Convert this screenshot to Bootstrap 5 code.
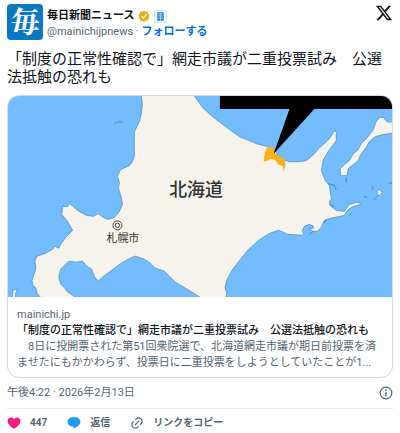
<!DOCTYPE html>
<html lang="ja">
<head>
<meta charset="utf-8">
<meta name="viewport" content="width=device-width, initial-scale=1">
<title>毎日新聞ニュース</title>
<link href="https://cdn.jsdelivr.net/npm/bootstrap@5.3.0/dist/css/bootstrap.min.css" rel="stylesheet">
<style>
body { font-family: Roboto, "Noto Sans CJK JP", sans-serif; font-size: 11px; line-height: 16px; color: #0f1419; background: #fff; }
.post { padding: 4px 7px 0; }
.avatar { width: 36px; height: 36px; border-radius: 4px; background: #0b78c4; color: #fff; font: 700 29px/34px "Noto Serif CJK JP", "Noto Sans CJK JP", serif; text-align: center; }
.soft { color: #536471; }
.follow { color: #006fd6; }
.gold { width: 12px; height: 12px; }
.org { width: 13px; height: 13px; }
.xlogo { width: 18px; height: 18px; }
.headline { font-size: 15px; line-height: 18px; margin: 10px 0 9px; }
.preview { border: 1px solid #cfd9de; border-radius: 12px; overflow: hidden; color: inherit; }
.preview-body { padding: 10px 9px 6px; }
.preview-title { font-weight: 500; }
.meta { padding: 7px 0 7px; border-bottom: 1px solid #e3e8eb; }
.round { width: 14px; height: 14px; }
.actions { gap: 20px; padding-top: 6px; }
.actions .btn { font-size: 10px; line-height: 16px; font-weight: 700; color: #536471; gap: 9px; }
.actions svg { width: 14px; height: 14px; }
</style>
</head>
<body>
<article class="post">
  <header class="d-flex align-items-start">
    <div class="avatar flex-shrink-0" aria-hidden="true">毎</div>
    <div class="flex-grow-1 ms-1 pt-1">
      <div class="d-flex align-items-center gap-1">
        <span class="fw-bold">毎日新聞ニュース</span>
        <svg class="gold" viewBox="0 0 24 24" role="img" aria-label="認証済み"><path fill="#e2b01e" d="M12 1l3 2.500 4-.3 1 3.800 3 2.500-1.500 3.500L23 16l-3 2-1 4-4-.5L12 24l-3-2.500-4 .5-1-4-3-2 1.500-3.500L1 9.500 4 7l1-3.800 4 .3z"/><path fill="none" stroke="#fff8df" stroke-width="2.500" d="M7 12.500l3.500 3.500L17 8.500"/></svg>
        <svg class="org" viewBox="0 0 12 12" aria-hidden="true"><rect x=".5" y=".5" width="11" height="11" rx="1" fill="#eef6fb" stroke="#d5e4ee"/><path fill="#2b8bc9" d="M3 2h6v8H3z"/><path stroke="#cfe7f7" stroke-width=".6" d="M4 3.500h4M4 5.500h4M4 7.500h4M6 3v7"/></svg>
      </div>
      <div><span class="soft">@mainichijpnews · </span><a href="#" class="follow fw-bold text-decoration-none">フォローする</a></div>
    </div>
    <svg class="xlogo" viewBox="0 0 24 24" role="img" aria-label="X"><path fill="#0f1419" d="M18.244 2.250h3.308l-7.227 8.260 8.502 11.240H16.170l-5.214-6.817L4.990 21.750H1.680l7.730-8.835L1.254 2.250H8.080l4.713 6.231zm-1.161 17.520h1.833L7.084 4.126H5.117z"/></svg>
  </header>

  <p class="headline">「制度の正常性確認で」網走市議が二重投票試み　公選法抵触の恐れも</p>

  <a href="#" class="preview d-block text-decoration-none">
    <svg class="d-block w-100" viewBox="7 95 386 202" role="img" aria-label="北海道の地図">
      <path fill="#73bcff" d="M7 95h386v202H7z"/>
      <g fill="#f5f3ec" stroke="#4f94c4" stroke-width=".8" stroke-linejoin="round">
        <path d="M141 93L142 104 141 113 139 121 134 131 134 155 132 161 129 165 120 169 117 176 119 182 118 188 121 197 122 204 119 211 114 217 107 219 101 216 98 213 93 216 86 215 77 210 69 203 67 206 62 206 61 214 66 220 72 230 65 237 60 244 58 248 54 246 52 249 45 253 36 256 34 261 35 268 34 272 31 280 32 285 35 288 36 293 41 299H76L73 296 67 292 64 288 60 284 58 277 60 269 68 261 75 262 82 261 86 266 91 269 94 277 98 281 102 277 110 271 121 263 130 258 135 256 144 259 150 263 155 268 164 271 175 282 190 291 203 299H226L227 292 225 288 227 280 233 269 240 260 248 250 259 240 270 233 279 230 284 232 288 234 303 235 304 234 303 230 305 226 310 224 314 226 314 228 310 228 313 231 318 231 322 227 325 220 328 219 331 218 345 215 348 210 352 207 361 204 361 202 357 202 350 204 345 211 337 210 332 206 330 202 332 198 330 185 326 180 322 170 324 159 330 149 337 140 337 131 335 130 330 138 326 142 320 147 315 153 307 160 299 161 290 161 280 158 275 149 272 147 257 143 240 136 230 129 213 116 203 107 193 93z"/>
        <path d="M341 168L341 175 348 175 349 168 359 160 362 153 367 147 370 141 376 136 383 134 395 132V121L388 121 385 117 381 116 377 121 374 129 368 137 362 143 359 149 354 153 350 160 345 164z"/>
        <path d="M378 190L381 189 383 192 381 195 378 194zM11 299L12 290 17 289 15 292 14 299z"/>
      </g>
      <path fill="none" stroke="#3d87b8" stroke-width="1" d="M329 183l6 2 2 4M330 204l5 2M347 177v5M314 231l-4 3M324 223l4-4M365 196l3 1M374 200l5-5M373 189l1-3M390 183l3-1M114 123l3-2M118 122l2-2 2 2M350 215l2-2"/>
      <path fill="#fbb117" d="M267 147l6-1 3 7 4 3 5 2 1 6-2 7-1-6-4-1-4-5-4-1-3 2-4 1 1-8z"/>
      <path d="M220 95h173v13H315l-41 45 16-45h-70z"/>
      <g fill="#333" font-family="Noto Sans CJK JP, sans-serif">
        <text x="169" y="196" font-size="18" font-weight="500">北海道</text>
        <text x="106" y="242" font-size="11">札幌市</text>
      </g>
      <g fill="none" stroke="#444"><circle cx="117" cy="225" r="4.500"/><circle cx="117" cy="225" r="2.200"/></g>
    </svg>
    <div class="preview-body">
      <div class="soft">mainichi.jp</div>
      <div class="preview-title text-truncate">「制度の正常性確認で」網走市議が二重投票試み　公選法抵触の恐れも</div>
      <div class="soft">　8日に投開票された第51回衆院選で、北海道網走市議が期日前投票を済<br>ませたにもかかわらず、投票日に二重投票をしようとしていたことが1...</div>
    </div>
  </a>

  <div class="meta soft d-flex justify-content-between align-items-center">
    <a href="#" class="soft text-decoration-none">午後4:22 · 2026年2月13日</a>
    <svg class="round" viewBox="0 0 14 14" role="img" aria-label="情報"><circle cx="7" cy="7" r="5.800" fill="none" stroke="#536471" stroke-width="1.200"/><path fill="#536471" d="M6.300 6.200h1.400v4H6.300zM6.200 3.600h1.600v1.500H6.200z"/></svg>
  </div>

  <div class="actions d-flex">
    <button type="button" class="btn p-0 border-0 d-flex align-items-center"><svg viewBox="0 0 24 24" aria-hidden="true"><path fill="#f91880" d="M12 22C5 17.500 1 13 1 8.500 1 5 3.500 2.500 7 2.500c2 0 4 1 5 3 1-2 3-3 5-3 3.500 0 6 2.500 6 6 0 4.500-4 9-11 13.500z"/></svg>447</button>
    <button type="button" class="btn p-0 border-0 d-flex align-items-center"><svg viewBox="0 0 24 24" aria-hidden="true"><path fill="#1d9bf0" d="M9.500 2h5C19 2 23 5.500 23 10c0 3-1.500 5.500-4 7l-8 5v-4H9.500C5 18 1 14.500 1 10s4-8 8.500-8z"/></svg>返信</button>
    <button type="button" class="btn p-0 border-0 d-flex align-items-center"><svg viewBox="0 0 24 24" aria-hidden="true"><path fill="#536471" d="M18.360 5.640c-1.950-1.960-5.110-1.960-7.070 0L9.880 7.050 8.460 5.640l1.420-1.420c2.730-2.730 7.160-2.730 9.900 0 2.730 2.740 2.730 7.170 0 9.900l-1.420 1.420-1.410-1.420 1.410-1.410c1.960-1.960 1.960-5.120 0-7.070zm-2.120 3.530l-7.070 7.070-1.410-1.410 7.070-7.070 1.410 1.410zm-12.020.710l1.420-1.420 1.410 1.420-1.410 1.410c-1.960 1.960-1.960 5.120 0 7.070 1.950 1.960 5.110 1.960 7.070 0l1.410-1.410 1.420 1.410-1.420 1.420c-2.730 2.730-7.160 2.730-9.900 0-2.730-2.740-2.730-7.170 0-9.900z"/></svg>リンクをコピー</button>
  </div>
</article>
<script src="https://cdn.jsdelivr.net/npm/bootstrap@5.3.0/dist/js/bootstrap.bundle.min.js"></script>
</body>
</html>
